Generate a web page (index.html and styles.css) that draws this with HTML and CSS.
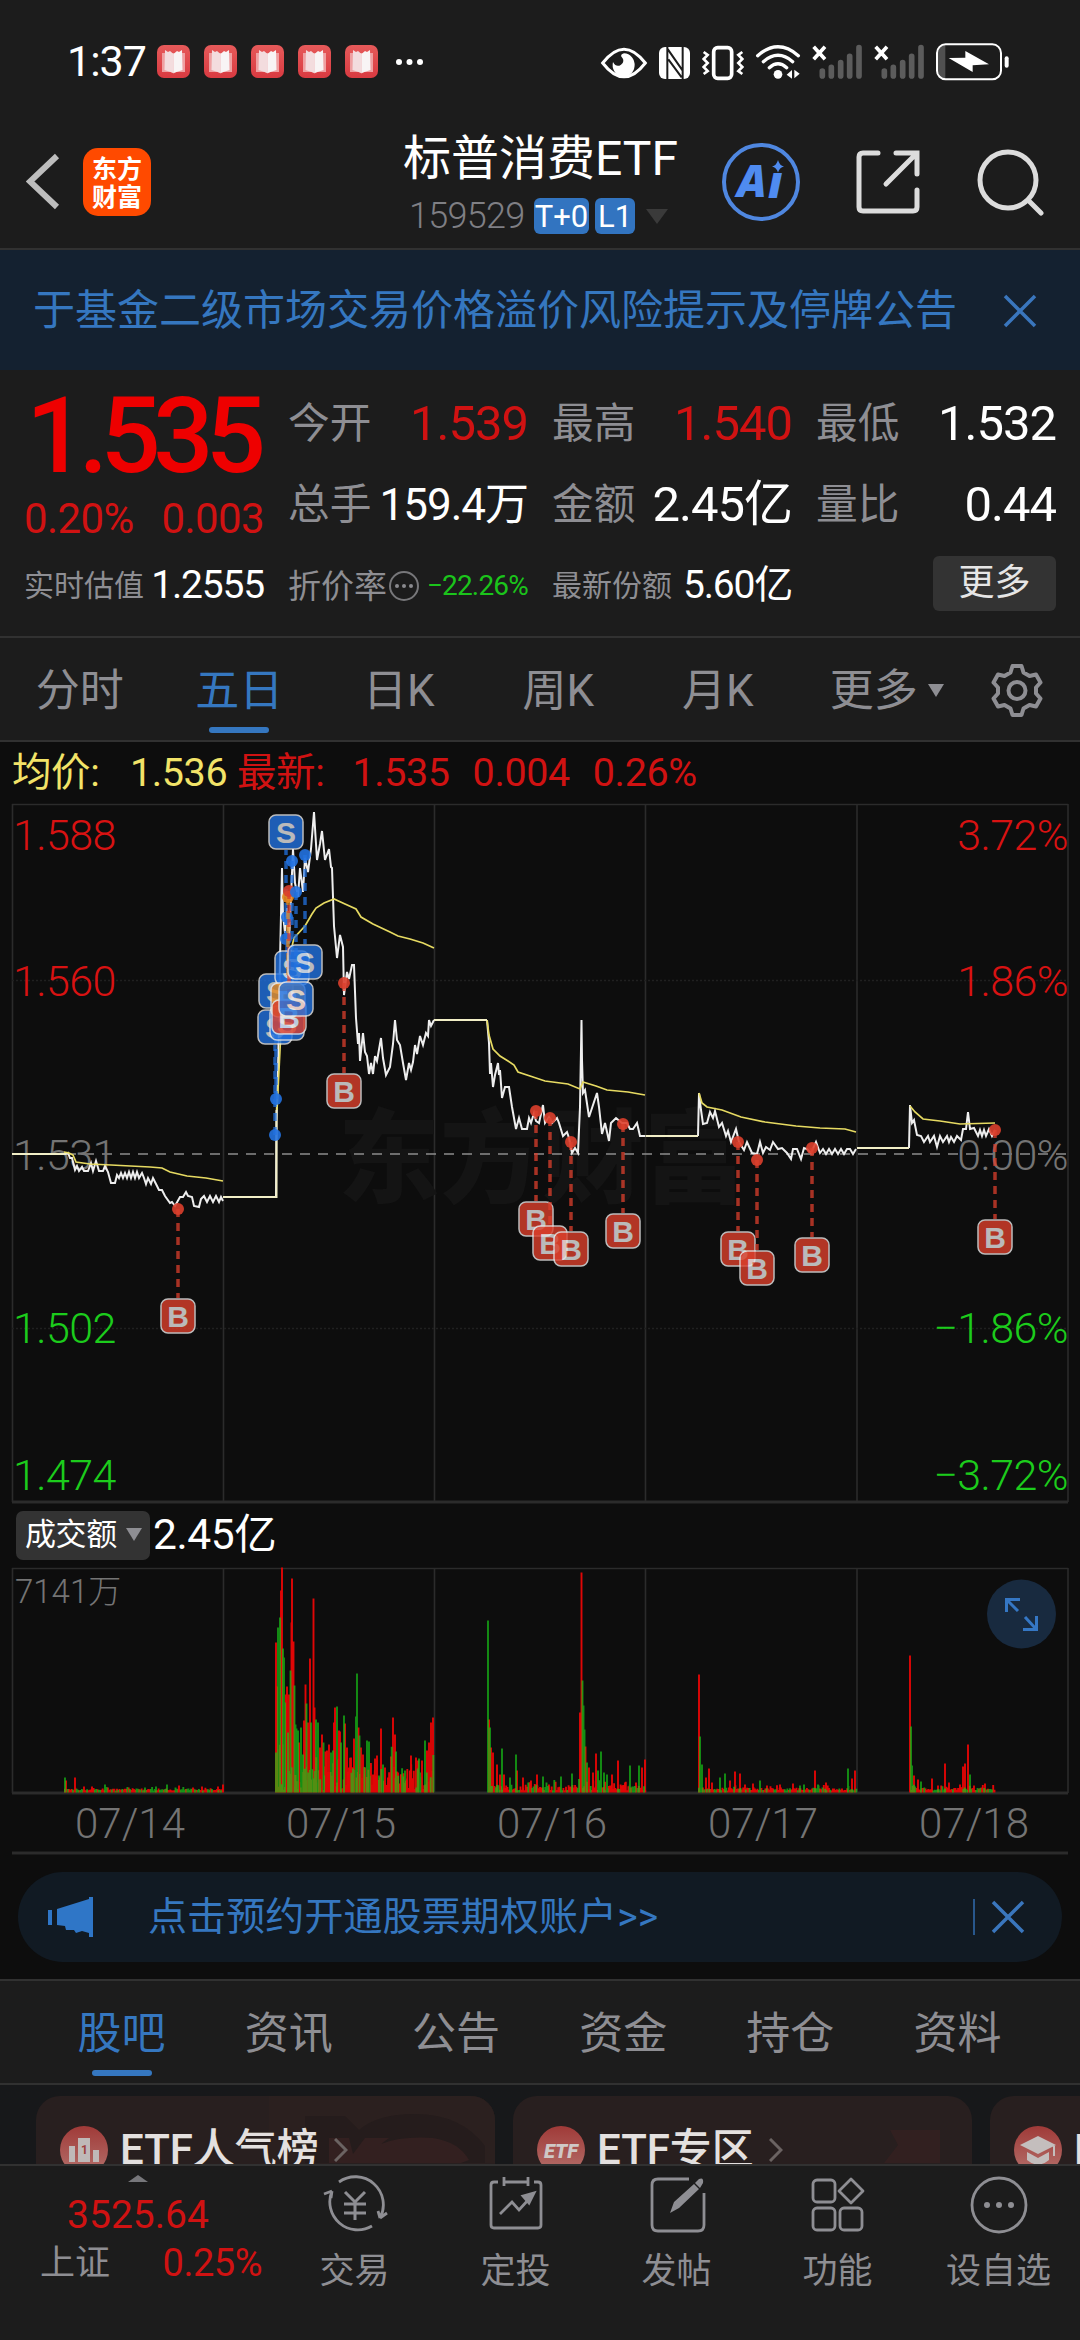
FILE: index.html
```html
<!DOCTYPE html>
<html lang="zh-CN">
<head>
    <meta charset="UTF-8">
    <meta name="viewport" content="width=device-width, initial-scale=1.0">
    <title>标普消费ETF 159529</title>
    <link rel="stylesheet" href="styles.css">
</head>
<body>
    <svg class="defs" width="0" height="0">
        <defs>
            <linearGradient id="red-fade" x1="0" y1="0" x2="0" y2="1">
                <stop offset="0" stop-color="#a03a38"/>
                <stop offset="1" stop-color="#b4706b"/>
            </linearGradient>
            <linearGradient id="book-bg" x1="0" y1="0" x2="0" y2="1">
                <stop offset="0" stop-color="#e65a5a"/>
                <stop offset="1" stop-color="#d93a41"/>
            </linearGradient>
            <symbol id="book" viewBox="0 0 33 33">
                <rect width="33" height="33" rx="7" fill="url(#book-bg)"/>
                <path d="M5 8h23v19h-9l-2.5 1.500-2.500-1.500h-9z" fill="#efa0a2"/>
                <path d="M8 5l3 2 2-1 3.500 3v19l-9-3z" fill="#f3dcde"/>
                <path d="M25 5l-3 2-2-1-3.500 3v19l9-3z" fill="#f8f4f5"/>
            </symbol>
        </defs>
    </svg>

    <div class="status-bar">
        <div class="status-left">
            <span class="clock">1:37</span>
            <svg class="book"><use href="#book"/></svg>
            <svg class="book"><use href="#book"/></svg>
            <svg class="book"><use href="#book"/></svg>
            <svg class="book"><use href="#book"/></svg>
            <svg class="book"><use href="#book"/></svg>
            <svg class="dots" width="28" height="8"><circle cx="3" cy="4" r="3"/><circle cx="13.500" cy="4" r="3"/><circle cx="24" cy="4" r="3"/></svg>
        </div>
        <svg class="status-icons" width="420" height="40" viewBox="0 32 1260 120">
            <!-- eye -->
            <path d="M38 95Q102 12 166 95Q102 178 38 95z" fill="none" stroke="#fff" stroke-width="9"/>
            <path d="M102 66a33 35 0 1 1-33 26q10 18 24 8t0-26q0-6 9-8z" fill="#fff"/>
            <!-- nfc -->
            <rect x="207" y="47" width="93" height="96" rx="18" fill="#fff"/>
            <path d="M232 47v96M232 52l46 66M235 84l40 54M278 47v96" stroke="#1c1c1c" stroke-width="6" fill="none"/>
            <!-- vibrate -->
            <rect x="371" y="49" width="54" height="92" rx="12" fill="none" stroke="#fff" stroke-width="11"/>
            <path d="M341 62l12 9-12 12 12 12-12 12 12 12-12 9M457 62l-12 9 12 12-12 12 12 12-12 12 12 9" fill="none" stroke="#fff" stroke-width="8"/>
            <!-- wifi -->
            <path d="M503 73Q564 20 625 73M520 91Q564 53 608 91M538 109Q564 86 590 109" fill="none" stroke="#fff" stroke-width="10" stroke-linecap="round"/>
            <circle cx="564" cy="129" r="13" fill="#fff"/>
            <path d="M590 130l16-14v26M629 127l-16 14v-26" fill="#fff"/>
            <!-- sim 1 and 2 -->
            <g id="sim">
                <path d="M671 46l34 38M705 46l-34 38" stroke="#fff" stroke-width="11"/>
                <path d="M697 119v15M724 108v26M752 94v40M779 75v59M807 49v85" stroke="#5c5c5c" stroke-width="17" stroke-linecap="round"/>
            </g>
            <use href="#sim" x="186"/>
            <!-- battery -->
            <path d="M1066 42h-6q-16 4-16 24v52q0 20 16 24h6z" fill="#505050"/>
            <rect x="1041" y="39" width="192" height="105" rx="26" fill="none" stroke="#fff" stroke-width="6"/>
            <path d="M1076 80l50-1v-20l71 40-49 3v20z" fill="#fff"/>
            <path d="M1250 81v22" stroke="#fff" stroke-width="12" stroke-linecap="round"/>
        </svg>
    </div>

    <div class="header">
        <div class="header-left">
            <svg width="34" height="58" viewBox="0 0 34 58"><path d="M31 3L4 28.500 31 54" fill="none" stroke="#bdbdbd" stroke-width="6"/></svg>
            <div class="logo">东方<br>财富</div>
        </div>
        <div class="header-title">
            <h1>标普消费ETF</h1>
            <div class="code-row">
                <span class="code">159529</span>
                <span class="tag tag-t0">T+0</span>
                <span class="tag tag-l1">L1</span>
                <i class="arrow-down"></i>
            </div>
        </div>
        <div class="header-right">
            <svg width="80" height="80" viewBox="0 0 80 80">
                <circle cx="40" cy="40" r="37" fill="none" stroke="#4f87e0" stroke-width="4"/>
                <text x="16" y="54.500" class="ai">A</text><text x="47" y="56" class="ai">ı</text>
                <path d="M57 18q1.500 5.500 6 6.500-4.500 1-6 6-1.500-5-6-6 4.500-1 6-6.500z" fill="#4f8bf0"/>
            </svg>
            <svg class="share" width="66" height="66" viewBox="0 0 66 66" fill="none" stroke="#dcdcdc" stroke-width="5" stroke-linecap="round">
                <path d="M23 4H8q-4 0-4 4v50q0 4 4 4h50q4 0 4-4V41M41 4h21v21M61 5L31 35"/>
            </svg>
            <svg width="68" height="68" viewBox="0 0 68 68" fill="none" stroke="#dcdcdc" stroke-width="5" stroke-linecap="round">
                <circle cx="31" cy="32" r="28"/><path d="M51 52l13 13"/>
            </svg>
        </div>
    </div>

    <div class="notice">
        <span>于基金二级市场交易价格溢价风险提示及停牌公告</span>
        <svg width="36" height="36" viewBox="0 0 36 36"><path d="M3 3l30 30M33 3L3 33" stroke="#3a76bd" stroke-width="3.500"/></svg>
    </div>

    <div class="quote">
        <div class="price-col">
            <div class="price">1.535</div>
            <div class="change"><span>0.20%</span><span>0.003</span></div>
        </div>
        <div class="cell"><label>今开</label><b class="up">1.539</b></div>
        <div class="cell"><label>最高</label><b class="up">1.540</b></div>
        <div class="cell"><label>最低</label><b>1.532</b></div>
        <div class="cell"><label>总手</label><b class="tight">159.4万</b></div>
        <div class="cell"><label>金额</label><b>2.45亿</b></div>
        <div class="cell"><label>量比</label><b>0.44</b></div>
        <div class="cell sub"><label>实时估值</label><b>1.2555</b></div>
        <div class="cell sub">
            <label class="wide">折价率</label>
            <svg width="32" height="32" viewBox="0 0 32 32"><circle cx="16" cy="16" r="14" fill="none" stroke="#77777a" stroke-width="2"/><g fill="#8a8a8e"><circle cx="9" cy="16" r="2"/><circle cx="16" cy="16" r="2"/><circle cx="23" cy="16" r="2"/></g></svg>
            <b class="down">−22.26%</b>
        </div>
        <div class="cell sub"><label>最新份额</label><b>5.60亿</b></div>
        <div class="cell sub more-cell"><span class="more-btn">更多</span></div>
    </div>

    <div class="tabs period-tabs">
        <span>分时</span>
        <span class="active">五日</span>
        <span>日K</span>
        <span>周K</span>
        <span>月K</span>
        <span class="more-tab">更多<i class="arrow-small"></i></span>
        <svg width="56" height="56" viewBox="0 0 56 56" fill="none" stroke="#8e8e93" stroke-width="4" stroke-linejoin="round">
            <path d="M23.500 4h9l2 6.500 6 3.500 6.500-1.500 4.500 8-4.500 5v6l4.500 5-4.500 8-6.500-1.500-6 3.500-2 6.500h-9l-2-6.500-6-3.500-6.500 1.500-4.500-8 4.500-5v-6l-4.500-5 4.500-8 6.500 1.500 6-3.500z"/>
            <circle cx="28" cy="28.500" r="8.500"/>
        </svg>
    </div>

    <div class="legend">
        <span class="avg">均价:</span><span class="avg n1">1.536</span>
        <span class="last">最新:</span><span class="last n2">1.535</span>
        <span class="last n3">0.004</span>
        <span class="last n3">0.26%</span>
    </div>

    <svg class="chart" id="price-chart" width="1080" height="702" viewBox="0 803 1080 702">
        <g class="grid">
            <path d="M12 804.500H1068M12.500 804V1502M223.500 804V1502M434.500 804V1502M645.500 804V1502M857 804V1502M1068 804V1502"/>
            <path d="M12 1502H1068" stroke-width="3"/>
            <path d="M12 980.500H1068M12 1328.500H1068" stroke-dasharray="2 2" stroke="#1f1f1f"/>
        </g>
        <text class="watermark" x="338" y="1195">东方财富</text>
        <path class="zero" d="M12 1154H1068"/>
        <g class="axis">
            <text x="13" y="850" class="r">1.588</text>
            <text x="13" y="996" class="r">1.560</text>
            <text x="13" y="1170">1.531</text>
            <text x="13" y="1343" class="g">1.502</text>
            <text x="13" y="1490" class="g">1.474</text>
        </g>
        <path class="line-price" id="line-price"/>
        <path class="line-avg" id="line-avg"/>
        <path class="line-flat" d="M12 1154H66M223 1197H276.500V1110M434 1020H487M645.500 1136H698M857 1148H909"/>
        <g class="axis end">
            <text x="1068" y="850" class="r">3.72%</text>
            <text x="1068" y="996" class="r">1.86%</text>
            <text x="1068" y="1170">0.00%</text>
            <text x="1068" y="1343" class="g">−1.86%</text>
            <text x="1068" y="1490" class="g">−3.72%</text>
        </g>
        <g id="markers"></g>
    </svg>

    <div class="volume-head">
        <span class="pill">成交额<i class="arrow-small"></i></span>
        <span>2.45亿</span>
    </div>

    <svg class="chart" width="1080" height="288" viewBox="0 1567 1080 288">
        <g class="grid">
            <path d="M12 1568.500H1068M12.500 1568V1793M223.500 1568V1793M434.500 1568V1793M645.500 1568V1793M857 1568V1793M1068 1568V1793"/>
            <path d="M12 1793H1068M12 1853H1068" stroke-width="3"/>
        </g>
        <text class="vol-max" x="15" y="1603">7141万</text>
        <g id="bars"></g>
        <g class="dates">
            <text x="130" y="1838">07/14</text>
            <text x="341" y="1838">07/15</text>
            <text x="552" y="1838">07/16</text>
            <text x="763" y="1838">07/17</text>
            <text x="974" y="1838">07/18</text>
        </g>
        <circle cx="1021.500" cy="1614" r="34.500" fill="#182a3f"/>
        <path d="M1006.500 1612V1599.500H1020M1006.500 1599.500L1018 1611M1036.500 1616V1629.500H1023M1036.500 1629.500L1025 1617" fill="none" stroke="#3577c4" stroke-width="3"/>
    </svg>

    <div class="promo">
        <svg width="46" height="40" viewBox="0 0 46 40" fill="#2f76c7"><path d="M0 13h4v15H0zM9 12L41 2V0h4v40h-4v-4l-7-2-6 2-2-3h-8l-1-4-8-1z"/></svg>
        <span class="promo-text">点击预约开通股票期权账户&gt;&gt;</span>
        <i class="divider"></i>
        <svg width="34" height="34" viewBox="0 0 34 34"><path d="M2 2l30 30M32 2L2 32" stroke="#3a76bd" stroke-width="3.500"/></svg>
    </div>

    <div class="tabs info-tabs">
        <span class="active">股吧</span>
        <span>资讯</span>
        <span>公告</span>
        <span>资金</span>
        <span>持仓</span>
        <span>资料</span>
    </div>

    <div class="cards">
        <div class="card">
            <svg class="card-art" width="226" height="67" viewBox="0 0 226 67"><path d="M0 0h226v67H0z" fill="#2b201f"/><path d="M36 20h40l14 14q18-16 56-16 46 0 70 32v17H36z" fill="#251c1c"/><path d="M60 42h20l4 16 12-16h24l-8 6q20-8 52-6 26 4 36 22l-8 3H60z" fill="#332020"/></svg>
            <svg class="card-icon" width="48" height="48" viewBox="0 0 48 48"><circle cx="24" cy="24" r="24" fill="url(#red-fade)"/><path d="M9 20h6v16H9zM18 12h12v24H18zM33 24h6v12h-6z" fill="#bfb9b8"/><text x="21" y="28" font-size="12" font-weight="700" fill="#9d403d">1</text></svg>
            <span>ETF人气榜</span>
            <svg class="chev" width="14" height="24" viewBox="0 0 14 24"><path d="M1 1l11 11L1 23" fill="none" stroke="#6b6362" stroke-width="3"/></svg>
        </div>
        <div class="card">
            <svg class="card-art" width="120" height="67" viewBox="0 0 120 67"><path d="M38 34h50v33H32l14-18z" fill="#322020"/></svg>
            <svg class="card-icon" width="48" height="48" viewBox="0 0 48 48"><circle cx="24" cy="24" r="24" fill="url(#red-fade)"/><text x="24" y="32" text-anchor="middle" font-size="20" font-weight="900" font-style="italic" fill="#cfc8c6">ETF</text></svg>
            <span>ETF专区</span>
            <svg class="chev" width="14" height="24" viewBox="0 0 14 24"><path d="M1 1l11 11L1 23" fill="none" stroke="#6b6362" stroke-width="3"/></svg>
        </div>
        <div class="card">
            <svg class="card-icon" width="48" height="48" viewBox="0 0 48 48"><circle cx="24" cy="24" r="24" fill="url(#red-fade)"/><path d="M6 19l18-9 18 9-18 9zM13 26l11 6 11-6v8q-11 9-22 0zM39 20h2v10h-2z" fill="#c4bebd"/></svg>
            <span>ETF学堂</span>
        </div>
    </div>

    <div class="bottom-bar">
        <div class="index">
            <i class="arrow-up"></i>
            <div class="index-value">3525.64</div>
            <div class="index-row"><span>上证</span><span class="up">0.25%</span></div>
        </div>
        <div class="nav-item">
            <svg width="66" height="60" viewBox="0 0 66 60" fill="none" stroke="#8e8e93" stroke-width="2.800">
                <path d="M17 7A28 28 0 0 1 58 43M58 43l7-5M58 43l-2-7M50 51A28 28 0 0 1 10 16M10 16l-8 3M10 16l-1 7"/>
                <path d="M23 17l10 10 10-10M22 29h22M22 38h22M33 27v18" stroke-width="3"/>
            </svg>
            <span>交易</span>
        </div>
        <div class="nav-item">
            <svg width="66" height="60" viewBox="0 0 66 60" fill="none" stroke="#8e8e93" stroke-width="2.800">
                <path d="M15 7h-4q-3 0-3 3v40q0 3 3 3h44q3 0 3-3V10q0-3-3-3h-4M21 7h24M21 2v9M45 2v9M17 39l12-12 7 8 10-11"/>
                <path d="M40 21l11-3-5 10z" fill="#8e8e93"/>
            </svg>
            <span>定投</span>
        </div>
        <div class="nav-item">
            <svg width="66" height="60" viewBox="0 0 66 60" fill="none" stroke="#8e8e93" stroke-width="2.800">
                <path d="M45 4H14q-6 0-6 6v40q0 6 6 6h40q6 0 6-6V18"/>
                <path d="M26 38l4-11 20-18 5 5-20 19zM51 8l4-4q5-2 4 4l-3 5z" fill="#8e8e93" stroke="none"/>
            </svg>
            <span>发帖</span>
        </div>
        <div class="nav-item">
            <svg width="66" height="60" viewBox="0 0 66 60" fill="none" stroke="#8e8e93" stroke-width="2.800">
                <rect x="8" y="5" width="22" height="22" rx="4"/><rect x="8" y="33" width="22" height="22" rx="4"/><rect x="35" y="33" width="22" height="22" rx="4"/>
                <path d="M46 4l12 12-12 12-12-12z" stroke-linejoin="round"/>
            </svg>
            <span>功能</span>
        </div>
        <div class="nav-item">
            <svg width="66" height="60" viewBox="0 0 66 60" fill="none" stroke="#8e8e93" stroke-width="2.800">
                <circle cx="33" cy="30" r="27"/><g fill="#8e8e93" stroke="none"><circle cx="21" cy="30" r="3"/><circle cx="33" cy="30" r="3"/><circle cx="45" cy="30" r="3"/></g>
            </svg>
            <span>设自选</span>
        </div>
    </div>

    <script src="chart.js"></script>
</body>
</html>
```

FILE: styles.css
```css
:root {
    --bg: #0d0d0d;
    --panel: #1c1c1c;
    --line: #313131;
    --gray: #8e8e93;
    --blue: #3577c0;
    --up: #d01212;
    --down: #1bc41b;
}

* {
    box-sizing: border-box;
}
body {
    margin: 0;
    width: 1080px;
    height: 2340px;
    overflow: hidden;
    background: var(--bg);
    color: #fff;
    font-family: Roboto, "Noto Sans CJK SC", sans-serif;
    font-size: 42px;
    line-height: 1;
    white-space: nowrap;
}
svg {
    display: block;
    flex: none;
}
.defs {
    position: absolute;
}
i {
    display: inline-block;
    flex: none;
}

/* status bar */
.status-bar {
    display: flex;
    justify-content: space-between;
    align-items: center;
    height: 123px;
    padding: 0 70px 0 67px;
    background: var(--panel);
}
.status-left {
    display: flex;
    align-items: center;
}
.clock {
    width: 90px;
    font-size: 43px;
    letter-spacing: -1px;
}
.book {
    width: 33px;
    height: 33px;
    margin-right: 14px;
}
.dots {
    margin-left: 4px;
    fill: #fff;
}

/* title bar */
.header {
    display: grid;
    grid-template-columns: 390px 300px 1fr;
    height: 127px;
    background: var(--panel);
    border-bottom: 2px solid var(--line);
}
.header-left {
    display: flex;
    align-items: center;
    gap: 23px;
    height: 118px;
    padding-left: 26px;
}
.logo {
    width: 68px;
    height: 68px;
    padding-top: 5px;
    border-radius: 15px;
    background: #ff4a00;
    font-family: "Noto Sans CJK SC", sans-serif;
    font-size: 25px;
    line-height: 28px;
    font-weight: 700;
    text-align: center;
}
.header-title h1 {
    margin: 12px 0 0;
    padding-left: 13px;
    font-size: 48px;
    line-height: 48px;
    font-weight: 400;
}
.code-row {
    display: flex;
    align-items: center;
    height: 36px;
    margin-top: 15px;
    padding-left: 19px;
}
.code {
    width: 125px;
    color: #7f7f84;
    font-size: 36px;
    font-weight: 300;
    letter-spacing: -0.7px;
}
.tag {
    height: 36px;
    margin-right: 6px;
    border-radius: 6px;
    background: #3274c0;
    font-size: 31px;
    line-height: 37px;
    text-align: center;
}
.tag-t0 {
    width: 55px;
}
.tag-l1 {
    width: 40px;
}
.arrow-down {
    margin-left: 5px;
    border: 11px solid transparent;
    border-top: 15px solid #3a3a3a;
    border-bottom: 0;
}
.header-right {
    display: flex;
    align-items: center;
    height: 118px;
    padding-left: 31px;
}
.share {
    margin: 0 56px 0 54px;
}
.ai {
    font: italic 800 44px "Open Sans", sans-serif;
    fill: #4f8bf0;
}

.notice {
    display: flex;
    align-items: center;
    justify-content: space-between;
    height: 120px;
    padding: 2px 42px 0 33px;
    background: #142130;
    color: var(--blue);
    font-size: 42px;
}

/* quote numbers */
.quote {
    display: grid;
    grid-template-columns: repeat(4, 240px);
    grid-template-rows: 81px 81px 81px;
    column-gap: 24px;
    height: 268px;
    padding: 13px 24px 0;
    background: var(--panel);
    border-bottom: 2px solid var(--line);
}
.price-col {
    grid-row: span 2;
}
.price {
    margin-top: 1px;
    padding-left: 2px;
    color: #ee0000;
    font-size: 106px;
    line-height: 104px;
    font-weight: 500;
    letter-spacing: -7.6px;
}
.change {
    display: flex;
    justify-content: space-between;
    margin-top: 10px;
    color: var(--up);
    font-size: 42px;
    letter-spacing: -0.6px;
}
.cell {
    display: flex;
    align-items: center;
    justify-content: space-between;
}
.cell label {
    padding-top: 1px;
    color: var(--gray);
    font-size: 41.7px;
}
.cell b {
    font-size: 49px;
    font-weight: 400;
    letter-spacing: -1px;
}
.cell .tight {
    font-size: 44px;
}
.cell .up, .index .up {
    color: var(--up);
}
.sub label {
    font-size: 30px;
}
.sub label.wide {
    font-size: 33px;
}
.sub b {
    font-size: 39px;
    letter-spacing: -1.2px;
}
.sub .down {
    margin-left: 6px;
    color: var(--down);
    font-size: 28px;
    letter-spacing: -0.8px;
}
.more-cell {
    justify-content: flex-end;
}
.more-btn {
    width: 123px;
    height: 55px;
    margin-top: -4px;
    border-radius: 6px;
    background: #333;
    color: #e6e6e6;
    font-size: 36px;
    line-height: 55px;
    text-align: center;
}

/* tab rows */
.tabs {
    display: grid;
    align-items: center;
    justify-items: center;
    height: 104px;
    background: var(--panel);
    border-bottom: 2px solid var(--line);
    color: var(--gray);
    font-size: 44px;
}
.tabs span {
    height: 104px;
    line-height: 106px;
}
.tabs .active {
    display: flex;
    flex-direction: column;
    align-items: center;
    color: var(--blue);
}
.tabs .active::after {
    content: "";
    width: 60px;
    height: 6px;
    margin-top: -17px;
    border-radius: 3px;
    background: var(--blue);
}
.period-tabs {
    grid-template-columns: repeat(6, 159.5px) 120px;
}
.more-tab {
    padding-left: 19px;
}
.arrow-small {
    margin-left: 10px;
    border: 8px solid transparent;
    border-top: 13px solid var(--gray);
    border-bottom: 0;
    vertical-align: 9px;
}
.info-tabs {
    grid-template-columns: repeat(6, 167.2px);
    height: 106px;
    padding-left: 38px;
    border-top: 2px solid var(--line);
}

.legend {
    display: flex;
    align-items: center;
    height: 61px;
    padding: 1px 0 0 12px;
    font-size: 39.5px;
    letter-spacing: -0.4px;
}
.avg {
    color: #f2e368;
}
.last {
    color: var(--up);
}
.avg:first-child {
    width: 118px;
}
.n1 {
    width: 107px;
}
.n2 {
    margin-left: 28px;
}
.n3 {
    margin-left: 23px;
}

/* charts */
.chart {
    font-family: Roboto, "Noto Sans CJK SC", sans-serif;
}
.grid path {
    fill: none;
    stroke: #2b2b2b;
    stroke-width: 1.6;
}
.grid path[stroke-dasharray] {
    stroke: #202020;
}
.grid path[stroke-width="3"] {
    stroke-width: 3;
}
.watermark {
    font: 900 102px "Noto Sans CJK SC", sans-serif;
    fill: #141414;
}
.zero {
    stroke: #8c8c8c;
    stroke-width: 1.6;
    stroke-dasharray: 10 8;
}
.axis text {
    font-size: 43px;
    font-weight: 300;
    letter-spacing: -0.6px;
    fill: #747474;
}
.axis .r {
    fill: #d81212;
}
.axis .g {
    fill: #1ccc1c;
}
.end text {
    text-anchor: end;
}
.line-price, .line-avg, .line-flat {
    fill: none;
    stroke: #eee;
    stroke-width: 2;
}
.line-avg {
    stroke: #e6da62;
    stroke-width: 1.7;
}
.line-flat {
    stroke: #f1eec6;
}
.marker text {
    font: 700 30px "Liberation Sans", sans-serif;
    text-anchor: middle;
    fill: #e6e6e6;
}
.vol-max {
    font-size: 33px;
    font-weight: 300;
    fill: #747474;
}
.dates text {
    font-size: 42px;
    font-weight: 300;
    text-anchor: middle;
    fill: #747474;
}

.volume-head {
    display: flex;
    align-items: center;
    gap: 3px;
    height: 62px;
    padding: 0 0 2px 16px;
    font-size: 42.5px;
    letter-spacing: -0.4px;
}
.pill {
    width: 134px;
    height: 49px;
    padding-left: 9px;
    border-radius: 7px;
    background: #333;
    font-size: 31px;
    line-height: 48px;
}
.pill .arrow-small {
    margin-left: 9px;
    vertical-align: 4px;
}

.promo {
    display: flex;
    align-items: center;
    height: 90px;
    margin: 17px 18px;
    padding: 0 37px 0 30px;
    border-radius: 45px;
    background: #111a23;
    color: var(--blue);
    font-size: 39px;
}
.promo-text {
    flex: 1;
    padding-left: 54px;
    letter-spacing: 0.1px;
}
.divider {
    width: 2px;
    height: 36px;
    margin-right: 16px;
    background: #28578c;
}

/* cut off by the bottom bar */
.cards {
    display: flex;
    gap: 18px;
    height: 79px;
    padding: 11px 0 0 36px;
    overflow: hidden;
    background: #17181a;
}
.card {
    position: relative;
    display: flex;
    flex: none;
    align-items: center;
    width: 459px;
    height: 108px;
    padding-left: 24px;
    border-radius: 24px;
    overflow: hidden;
    background: #281f1f;
    font-size: 42px;
    font-weight: 500;
    color: #e4e0df;
}
.card-art {
    position: absolute;
    top: 0;
    right: 0;
}
.card-icon {
    position: relative;
    margin-right: 12px;
}
.card span {
    position: relative;
}
.chev {
    position: relative;
    margin-left: 15px;
}

.bottom-bar {
    display: grid;
    grid-template-columns: 274px repeat(5, 161px);
    height: 177px;
    border-top: 2px solid var(--line);
    background: var(--panel);
    color: var(--gray);
    font-size: 35px;
}
.index {
    display: flex;
    flex-direction: column;
    align-items: center;
    padding-left: 2px;
}
.arrow-up {
    margin-top: 9px;
    border: 10px solid transparent;
    border-top: 0;
    border-bottom: 7px solid #77777b;
}
.index-value {
    margin: 14px 0 9px;
    color: var(--up);
    font-size: 39px;
}
.index-row {
    display: flex;
    align-items: center;
    justify-content: space-between;
    width: 222px;
    height: 38px;
    margin-left: 26px;
}
.index-row .up {
    font-size: 38px;
    letter-spacing: -0.5px;
}
.nav-item {
    display: flex;
    flex-direction: column;
    align-items: center;
    padding-top: 9px;
}
.nav-item span {
    margin-top: 19px;
}
```

FILE: chart.js
```js
const NS = 'http://www.w3.org/2000/svg';

const price = [
    '66,1154 68,1153 70,1158 72,1158 75,1170 77,1166 79,1171 82,1167 84,1171 88,1171 91,1163 93,1171 96,1161 99,1171 103,1171 105,1166 108,1172 111,1183 115,1183 117,1175 119,1178 121,1173 123,1178 125,1173 127,1178 129,1172 131,1178 133,1172 135,1178 137,1172 139,1178 142,1173 144,1178 146,1184 148,1178 151,1184 153,1178 156,1184 159,1190 162,1190 165,1196 170,1203 172,1202 175,1206 180,1197 183,1197 186,1192 188,1196 192,1197 194,1206 199,1207 201,1199 204,1196 207,1202 210,1196 213,1202 216,1196 219,1202 221,1197 223,1201',
    '276,1197 276.5,1120 278,1070 280,960 282,868 283,915 285,933 287,908 289,943 291,897 293,849 295,883 298,897 300,868 303,892 305,858 308,872 311,849 314,812 317,860 320,844 322,831 325,860 329,849 331,867 332,868 334,926 337,958 340,935 343,947 344,995 347,972 349,979 352,965 354,965 356,1018 358,1044 359,1033 360,1061 363,1033 365,1052 367,1056 369,1074 371,1063 373,1074 375,1056 377,1061 381,1038 383,1058 386,1075 390,1067 393,1044 395,1020 397,1040 400,1045 403,1063 406,1080 409,1063 411,1070 413,1062 415,1045 417,1054 420,1036 423,1045 426,1033 428,1036 429,1020 431,1026 434,1020',
    '487,1020 489,1043 490,1074 491,1063 493,1087 495,1075 498,1063 499,1075 500,1070 502,1098 505,1087 509,1087 512,1107 516,1129 519,1118 522,1129 527,1129 529,1118 531,1123 534,1113 536,1121 539,1123 543,1105 545,1123 549,1117 552,1123 557,1118 559,1123 563,1136 567,1132 569,1138 572,1153 575,1148 578,1153 580,1107 581.5,1020 582,1060 583,1093 585,1090 589,1117 593,1105 597,1093 599,1107 602,1134 605,1123 609,1141 611,1123 616,1118 622,1123 627,1123 630,1129 633,1129 637,1123 640,1136 645,1136',
    '698,1136 699,1093 701,1110 703,1124 707,1123 710,1112 713,1118 715,1111 719,1127 722,1123 726,1136 728,1131 731,1142 736,1129 739,1142 744,1150 747,1142 752,1153 757,1154 760,1142 763,1153 766,1147 770,1150 773,1142 778,1149 782,1148 787,1153 791,1159 793,1149 797,1149 801,1159 804,1148 807,1149 811,1153 816,1142 820,1153 823,1149 826,1154 829,1149 832,1154 835,1149 838,1154 841,1149 844,1154 847,1149 850,1149 853,1154 856,1149',
    '909,1148 910,1105 912,1123 914,1120 917,1135 921,1136 924,1142 928,1136 930,1142 934,1136 937,1147 940,1136 943,1142 947,1136 949,1142 951,1137 954,1142 957,1136 961,1140 963,1129 966,1129 968,1112 970,1129 974,1128 978,1136 980,1130 982,1136 984,1130 986,1136 989,1129 992,1136 995,1130'
];

const avg = [
    '64,1152 69,1153 73,1155 76,1162 90,1164 111,1165 150,1167 162,1168 170,1172 187,1176 206,1178 223,1181',
    '277,1110 281,1030 287,980 290,955 294,938 305,926 312,914 316,908 324,903 334,899 345,904 356,909 361,917 373,924 390,932 398,936 410,939 423,943 434,948',
    '487,1020 489,1035 493,1049 500,1056 508,1061 514,1065 518,1072 530,1076 545,1081 568,1084 580,1089 583,1082 596,1086 607,1090 628,1092 645,1095',
    '699,1093 702,1103 707,1107 722,1110 741,1117 765,1122 796,1126 820,1128 845,1129 856,1132',
    '910,1106 915,1112 923,1119 940,1121 960,1124 995,1123'
];

document.getElementById('line-price').setAttribute('d', price.map(p => 'M' + p).join(''));
document.getElementById('line-avg').setAttribute('d', avg.map(p => 'M' + p).join(''));

// [type, x, dot y, label y]
const markers = [
    ['S', 275, 1135, 1027], ['S', 276, 1099, 991], ['S', 286, 939, 832],
    ['S', 287, 917, 1023], ['S', 292, 861, 968], ['T', 288, 897, 1000],
    ['B', 289, 891, 1017], ['S', 296, 892, 999], ['S', 305, 855, 962],
    ['B', 178, 1209, 1316], ['B', 344, 983, 1091], ['B', 536, 1111, 1219],
    ['B', 550, 1118, 1243], ['B', 571, 1142, 1249], ['B', 623, 1124, 1231],
    ['B', 738, 1142, 1249], ['B', 757, 1160, 1268], ['B', 812, 1148, 1255],
    ['B', 995, 1130, 1237]
];
const colors = { S: '#2272e0', B: '#dc3f2c', T: '#e88a20' };

document.getElementById('markers').innerHTML = markers.map(([type, x, dot, y]) => {
    const c = colors[type];
    const edge = y > dot ? y - 18 : y + 18;
    return `<g class="marker">
        <path d="M${x} ${dot}V${edge}" stroke="${c}" stroke-width="3.5" stroke-dasharray="8 6" opacity=".75"/>
        <circle cx="${x}" cy="${dot}" r="6" fill="${c}" opacity=".9"/>
        <g opacity=".8">
            <rect x="${x - 17}" y="${y - 17}" width="34" height="34" rx="7" fill="${c}" stroke="#e8e8e8" stroke-width="1.5"/>
            <text x="${x}" y="${y + 11}">${type === 'S' ? 'S' : 'B'}</text>
        </g>
    </g>`;
}).join('');

// turnover spikes, x:height, g = falling minute
const days = [
    { from: 65, to: 223, base: 2, spikes: '65:15g 66:12 75:15 84:6 92:6 105:8g 145:5g 156:6g 167:8g 179:7 193:5 202:6 218:6 223:8' },
    { from: 276, to: 434, base: 24, spikes: '276:150 277:106 278:165g 280:175g 281:202 282:225 283:144g 284:135g 285:90g 286:98 287:106 288:60g 289:98 290.500:122g 291.500:170 292:214 293.500:151 294.500:107g 295.500:68g 296.500:64g 298:62g 299:50 301:65g 303:38g 304:72 305.500:108 306.500:89g 308:70 310:134 311:70g 313.500:194 314.500:85 316:73g 318:70g 320:45 322:58 323.500:50g 325:26 327:42 329:48 331:40g 333:42g 334:70 335:85 337:86g 339:62 340:61 341:50g 344:77g 345:69 347:45 349:25 351:35 353:24g 354:54 356:76g 357:119g 358.500:65 359.500:57g 361:45 363:38 365:25 367:52g 369:51g 371:28 373:18 375:34 377:37 379:17g 381:64 383:28g 385:25 388:15 391:36 393:75 395:58 396:41g 398:20 403:16g 405:22g 407:14 411:37 416:35 418:32 420:20g 422:32 425:52g 427:42 429:50 431:70 433:75' },
    { from: 488, to: 646, base: 6, spikes: '488:172g 489:73 490:65g 491:45 493:40 497:28 500:18 502:44g 504:18 510:15g 516:38g 517:22 523:15 531:12 537:18 543:16g 549:8 561:16g 572:19g 580:80 581.500:220 582.500:112g 583.500:87g 584.500:63g 585.500:46 587:30g 589:25 593:20 596:39 598:22g 601:41g 604:20g 607:18g 612:18 618:32 625:10 630:27g 636:10 639:27g 642:25 645:33' },
    { from: 699, to: 857, base: 3, spikes: '699:118 700:56g 702:28g 706:15 709:24 712:10 720:15g 725:19g 730:12 735:21 740:19 745:8 753:9 760:12g 767:7 780:8 793:9 800:7g 804:8g 815:22 818:8g 826:10 848:24g 852:14 855:22' },
    { from: 910, to: 995, base: 3, spikes: '910:137 911:66g 912:27g 914:17 918:13 921:11g 932:14 938:7 945:29 949:10 960:8 963:26 965:29 968:48 970:18g 974:7 985:9' }
];

let seed = 7;
function rand() {
    seed = (seed * 16807) % 2147483647;
    return seed / 2147483647;
}

const bottom = 1792.5;
let red = '';
let green = '';
for (const day of days) {
    for (let x = day.from; x < day.to; x += 1.3) {
        const big = rand() > 0.82 ? 2 : 1;
        const h = (2 + rand() * day.base * big).toFixed(1);
        const bar = `M${x.toFixed(1)} ${bottom}v-${h}`;
        if (rand() > 0.66) green += bar; else red += bar;
    }
    for (const s of day.spikes.split(' ')) {
        const [x, h] = s.split(':');
        const bar = `M${x} ${bottom}v-${parseFloat(h)}`;
        if (h.endsWith('g')) green += bar; else red += bar;
    }
}

const bars = document.getElementById('bars');
[[red, '#e00606', 1], [green, '#18c818', 0.7]].forEach(([d, color, opacity]) => {
    const path = document.createElementNS(NS, 'path');
    path.setAttribute('d', d);
    path.setAttribute('stroke', color);
    path.setAttribute('stroke-width', 1.9);
    path.setAttribute('opacity', opacity);
    bars.appendChild(path);
});
```
